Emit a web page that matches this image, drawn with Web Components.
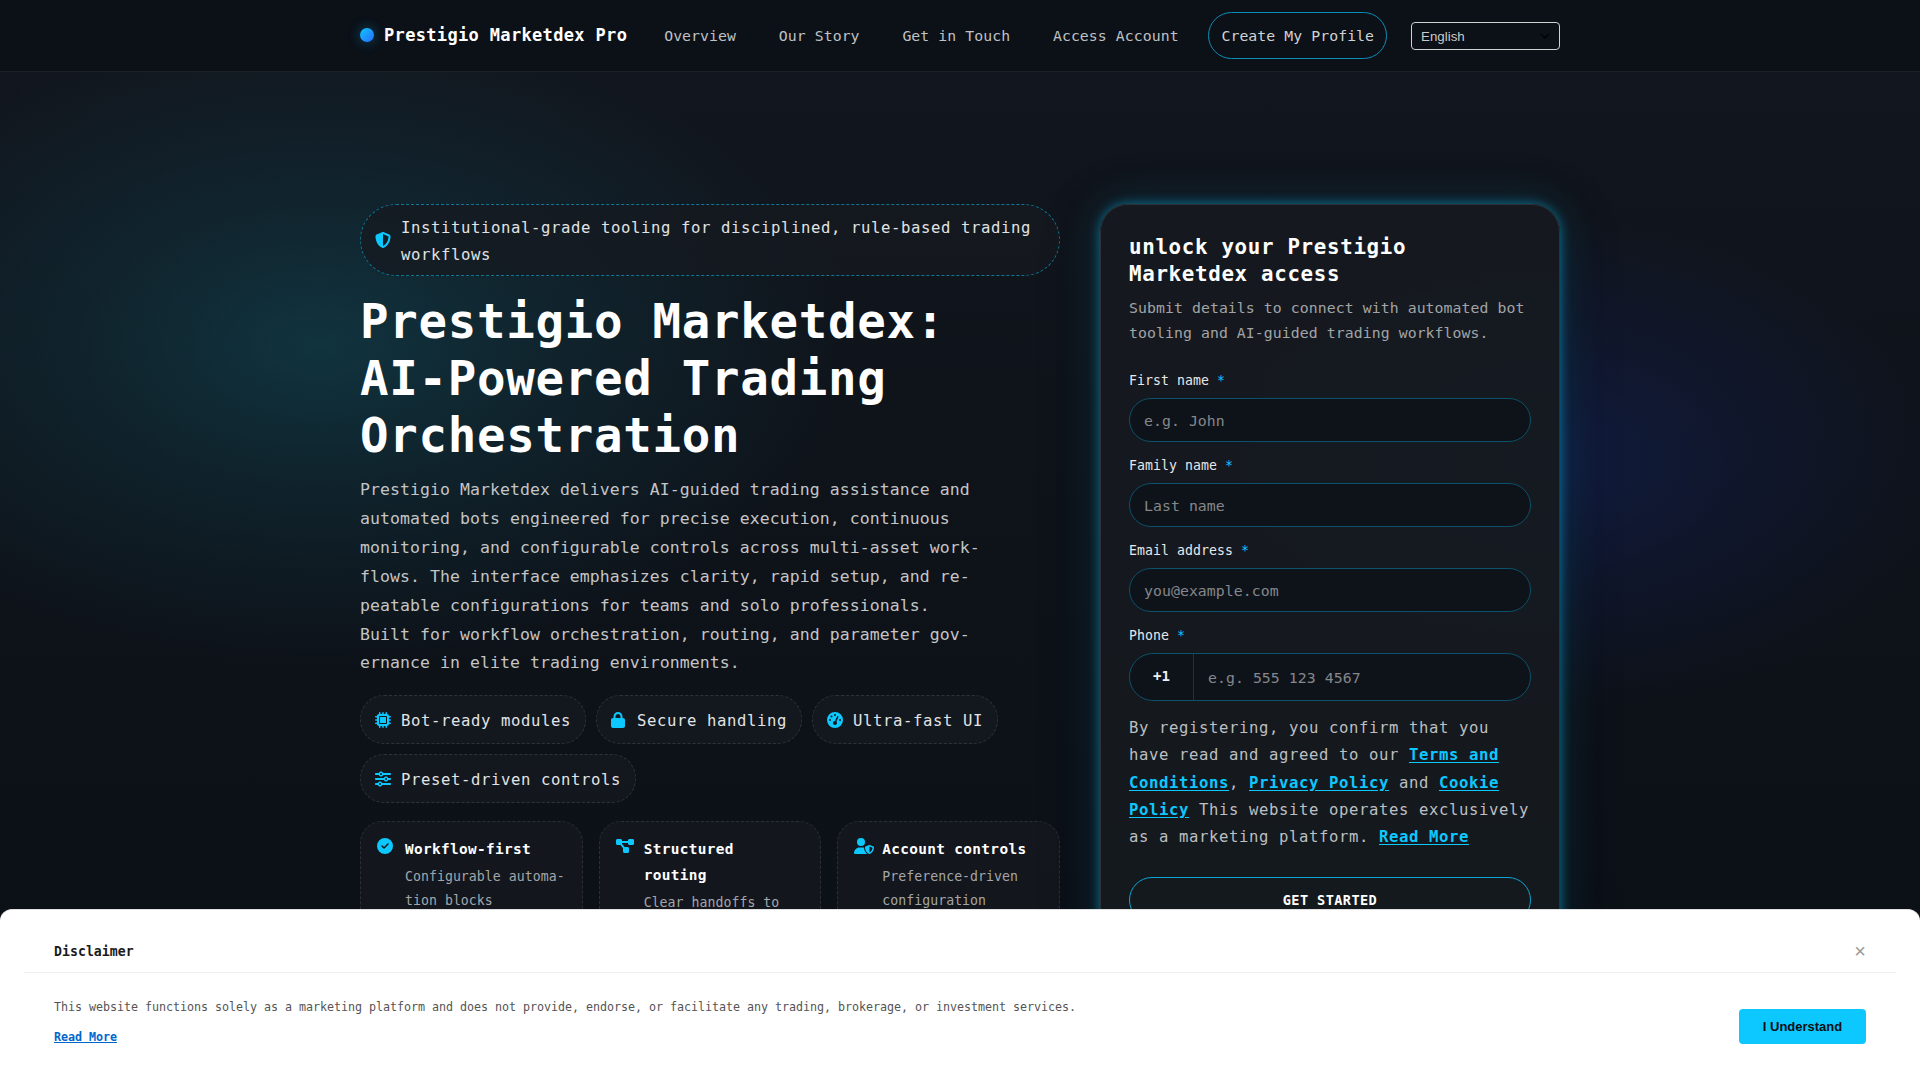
<!DOCTYPE html>
<html lang="en">
<head>
<meta charset="UTF-8">
<title>Prestigio Marketdex Pro</title>
<style>
  html, body {
    margin: 0;
    height: 100%;
    overflow: hidden;
  }
  body {
    --accent: #0dc8ff;
    --surface: rgba(22, 26, 32, 0.75);
    background:
      radial-gradient(ellipse 540px 325px at 320px 345px, rgba(20, 190, 220, 0.19), rgba(20, 190, 220, 0.09) 45%, transparent),
      radial-gradient(ellipse 420px 250px at 1536px 461px, rgba(24, 55, 180, 0.24), rgba(24, 50, 170, 0.12) 50%, transparent),
      linear-gradient(#12161e, #0f131a 400px, #0c1017 900px);
    color: #fff;
    font-family: "DejaVu Sans Mono", monospace;
    font-size: 15.6px;
    line-height: 27.2px;
  }
</style>
</head>
<body>
<site-header brand="Prestigio Marketdex Pro">
  <nav-link>Overview</nav-link>
  <nav-link>Our Story</nav-link>
  <nav-link>Get in Touch</nav-link>
  <nav-link>Access Account</nav-link>
  <nav-link primary>Create My Profile</nav-link>
</site-header>

<hero-section>
  <hero-pill highlight icon="shield">Institutional-grade tooling for disciplined, rule-based trading workflows</hero-pill>
  <span slot="title">Prestigio Marketdex:<br>AI-Powered Trading<br>Orchestration</span>
  <span slot="lead">Prestigio Marketdex delivers AI-guided trading assistance and automated bots engineered for precise execution, continuous monitoring, and configurable controls across multi-asset work&shy;flows. The interface emphasizes clarity, rapid setup, and re&shy;peatable configurations for teams and solo professionals.<br>Built for workflow orchestration, routing, and parameter gov&shy;ernance in elite trading environments.</span>
  <hero-pill slot="chips" icon="chip">Bot-ready modules</hero-pill>
  <hero-pill slot="chips" icon="lock">Secure handling</hero-pill>
  <hero-pill slot="chips" icon="gauge">Ultra-fast UI</hero-pill>
  <hero-pill slot="chips" icon="sliders">Preset-driven controls</hero-pill>
  <feature-card slot="cards" icon="check" heading="Workflow-first">Configurable automa&shy;tion blocks</feature-card>
  <feature-card slot="cards" icon="diagram" heading="Structured routing">Clear handoffs to execution</feature-card>
  <feature-card slot="cards" icon="user" heading="Account controls">Preference-driven configuration</feature-card>
  <signup-card slot="form">
    <form-field label="First name" placeholder="e.g. John"></form-field>
    <form-field label="Family name" placeholder="Last name"></form-field>
    <form-field label="Email address" placeholder="you@example.com"></form-field>
    <form-field label="Phone" placeholder="e.g. 555 123 4567" prefix="+1"></form-field>
  </signup-card>
</hero-section>

<disclaimer-bar heading="Disclaimer">This website functions solely as a marketing platform and does not provide, endorse, or facilitate any trading, brokerage, or investment services.</disclaimer-bar>

<script>
const ICONS = {
  shield: [512, 'M256 0c4.6 0 9.2 1 13.4 2.9L457.7 82.8c22 9.3 38.4 31 38.3 57.2c-.5 99.2-41.3 280.7-213.6 363.2c-16.7 8-36.1 8-52.8 0C57.3 420.7 16.5 239.2 16 140c-.1-26.2 16.3-47.9 38.3-57.2L242.7 2.9C246.8 1 251.4 0 256 0zm0 66.8V444.8C394 378 431.1 230.1 432 141.4L256 66.8l0 0z'],
  chip: [512, 'M176 24c0-13.3-10.7-24-24-24s-24 10.7-24 24V64c-35.3 0-64 28.7-64 64H24c-13.3 0-24 10.7-24 24s10.7 24 24 24H64v56H24c-13.3 0-24 10.7-24 24s10.7 24 24 24H64v56H24c-13.3 0-24 10.7-24 24s10.7 24 24 24H64c0 35.3 28.7 64 64 64v40c0 13.3 10.7 24 24 24s24-10.7 24-24V448h56v40c0 13.3 10.7 24 24 24s24-10.7 24-24V448h56v40c0 13.3 10.7 24 24 24s24-10.7 24-24V448c35.3 0 64-28.7 64-64h40c13.3 0 24-10.7 24-24s-10.7-24-24-24H448V280h40c13.3 0 24-10.7 24-24s-10.7-24-24-24H448V176h40c13.3 0 24-10.7 24-24s-10.7-24-24-24H448c0-35.3-28.7-64-64-64V24c0-13.3-10.7-24-24-24s-24 10.7-24 24V64H280V24c0-13.3-10.7-24-24-24s-24 10.7-24 24V64H176V24zM160 128H352c17.7 0 32 14.3 32 32V352c0 17.7-14.3 32-32 32H160c-17.7 0-32-14.3-32-32V160c0-17.7 14.3-32 32-32zm192 32H160V352H352V160z'],
  lock: [448, 'M144 144v48H304V144c0-44.2-35.8-80-80-80s-80 35.8-80 80zM80 192V144C80 64.5 144.5 0 224 0s144 64.5 144 144v48h16c35.3 0 64 28.7 64 64V448c0 35.3-28.7 64-64 64H64c-35.3 0-64-28.7-64-64V256c0-35.3 28.7-64 64-64H80z'],
  gauge: [512, 'M0 256a256 256 0 1 1 512 0A256 256 0 1 1 0 256zM288 96a32 32 0 1 0 -64 0 32 32 0 1 0 64 0zM256 416c35.3 0 64-28.7 64-64c0-17.4-6.9-33.1-18.1-44.6L366 161.7c5.3-12.1-.2-26.3-12.3-31.6s-26.3 .2-31.6 12.3L257.9 288c-.6 0-1.3 0-1.9 0c-35.3 0-64 28.7-64 64s28.7 64 64 64zM176 144a32 32 0 1 0 -64 0 32 32 0 1 0 64 0zM96 288a32 32 0 1 0 0-64 32 32 0 1 0 0 64zm352-32a32 32 0 1 0 -64 0 32 32 0 1 0 64 0z'],
  sliders: [512, 'M0 416c0 17.7 14.3 32 32 32l54.7 0c12.3 28.3 40.5 48 73.3 48s61-19.7 73.3-48L480 448c17.7 0 32-14.3 32-32s-14.3-32-32-32l-246.7 0c-12.3-28.3-40.5-48-73.3-48s-61 19.7-73.3 48L32 384c-17.7 0-32 14.3-32 32zm128 0a32 32 0 1 1 64 0 32 32 0 1 1 -64 0zM320 256a32 32 0 1 1 64 0 32 32 0 1 1 -64 0zm32-80c-32.8 0-61 19.7-73.3 48L32 224c-17.7 0-32 14.3-32 32s14.3 32 32 32l246.7 0c12.3 28.3 40.5 48 73.3 48s61-19.7 73.3-48l54.7 0c17.7 0 32-14.3 32-32s-14.3-32-32-32l-54.7 0c-12.3-28.3-40.5-48-73.3-48zM192 128a32 32 0 1 1 0-64 32 32 0 1 1 0 64zm73.3-64C253 35.7 224.8 16 192 16s-61 19.7-73.3 48L32 64C14.3 64 0 78.3 0 96s14.3 32 32 32l86.7 0c12.3 28.3 40.5 48 73.3 48s61-19.7 73.3-48L480 128c17.7 0 32-14.3 32-32s-14.3-32-32-32L265.3 64z'],
  check: [512, 'M256 512A256 256 0 1 0 256 0a256 256 0 1 0 0 512zM369 209L241 337c-9.4 9.4-24.6 9.4-33.9 0l-64-64c-9.4-9.4-9.4-24.6 0-33.9s24.6-9.4 33.9 0l47 47L335 175c9.4-9.4 24.6-9.4 33.9 0s9.4 24.6 0 33.9z'],
  diagram: [576, 'M0 80C0 53.5 21.5 32 48 32h96c26.5 0 48 21.5 48 48V96H384V80c0-26.5 21.5-48 48-48h96c26.5 0 48 21.5 48 48v96c0 26.5-21.5 48-48 48H432c-26.5 0-48-21.5-48-48V160H192v16c0 1.7-.1 3.4-.3 5L272 288h96c26.5 0 48 21.5 48 48v96c0 26.5-21.5 48-48 48H272c-26.5 0-48-21.5-48-48V336c0-1.7 .1-3.4 .3-5L144 224H48c-26.5 0-48-21.5-48-48V80z'],
  user: [640, 'M224 256A128 128 0 1 0 224 0a128 128 0 1 0 0 256zm-45.7 48C79.8 304 0 383.8 0 482.3C0 498.7 13.3 512 29.7 512H418.3c1.8 0 3.5-.2 5.3-.5c-76.3-55.1-99.8-141-103.1-200.2c-16.1-4.8-33.1-7.3-50.7-7.3H178.3zm308.8-78.3l-120 48C358 277.4 352 286.2 352 296c0 63.3 25.9 168.8 134.8 214.2c5.9 2.5 12.6 2.5 18.5 0C614.1 464.8 640 359.3 640 296c0-9.8-6-18.6-15.1-22.3l-120-48c-5.7-2.3-12.1-2.3-17.8 0zM591.4 312c-3.9 50.7-27.2 116.7-95.4 149.7V273.8L591.4 312z'],
};

function icon(name) {
  const [width, path] = ICONS[name];
  return `<svg viewBox="0 0 ${width} 512" width="${width / 32}" height="16" fill="currentColor" fill-rule="evenodd"><path d="${path}"/></svg>`;
}

class NavLink extends HTMLElement {
  constructor() {
    super();
    this.attachShadow({ mode: 'open' }).innerHTML = `
      <style>
        :host {
          display: block;
          border: 1px solid transparent;
          border-radius: 999px;
          padding: 10px 12px;
          font-size: 14.8px;
          line-height: 25px;
          letter-spacing: 0.07px;
          color: #bfc1c4;
          white-space: nowrap;
        }
        :host([primary]) {
          border-color: #0b8fb9;
          color: #d0d2d4;
        }
      </style>
      <slot></slot>`;
  }
}

class SiteHeader extends HTMLElement {
  constructor() {
    super();
    this.attachShadow({ mode: 'open' }).innerHTML = `
      <style>
        :host {
          display: block;
          background: #0c1017;
          border-bottom: 1px solid #1d2128;
        }
        .bar {
          display: flex;
          align-items: center;
          justify-content: space-between;
          box-sizing: border-box;
          width: 1200px;
          height: 71px;
          margin: 0 auto;
        }
        .brand {
          display: flex;
          align-items: center;
          gap: 10px;
          font-size: 17px;
          letter-spacing: 0.34px;
          font-weight: bold;
          white-space: nowrap;
        }
        .dot {
          width: 14px;
          height: 14px;
          border-radius: 50%;
          background: linear-gradient(135deg, #0dc8ff, #2a6bff);
          box-shadow: 0 0 12px rgba(13, 200, 255, 0.35), 0 0 0 10px rgba(13, 200, 255, 0.01);
        }
        nav {
          display: flex;
          gap: 16.8px;
        }
        .select {
          display: flex;
          align-items: center;
          justify-content: space-between;
          box-sizing: border-box;
          width: 149px;
          height: 28px;
          padding: 1px 9px 0;
          border: 1px solid #cfd1d3;
          border-radius: 4px;
          font: 13.33px "Liberation Sans", sans-serif;
          color: #c8cacc;
        }
      </style>
      <div class="bar">
        <div class="brand"><span class="dot"></span>${this.getAttribute('brand')}</div>
        <nav><slot></slot></nav>
        <div class="select">English
          <svg width="10" height="6" viewBox="0 0 10 6" fill="none" stroke="#020305" stroke-width="1.6"><path d="M1 1l4 4 4-4"/></svg>
        </div>
      </div>`;
  }
}

class HeroPill extends HTMLElement {
  constructor() {
    super();
    this.attachShadow({ mode: 'open' }).innerHTML = `
      <style>
        :host {
          display: flex;
          align-items: center;
          gap: 10px;
          box-sizing: border-box;
          min-height: 49px;
          padding: 0 14px;
          border: 1px dashed #2e3239;
          border-radius: 24px;
          background: var(--surface);
          letter-spacing: 0.61px;
          color: #e2e3e4;
        }
        :host([highlight]) {
          border-color: #0e7795;
          border-radius: 36px;
          padding: 8px 14px;
          min-height: 72px;
        }
        .icon {
          display: flex;
          flex: 0 0 16px;
          color: var(--accent);
        }
        .text {
          position: relative;
          top: 2px;
        }
      </style>
      <span class="icon">${icon(this.getAttribute('icon'))}</span>
      <span class="text"><slot></slot></span>`;
  }
}

class FeatureCard extends HTMLElement {
  constructor() {
    super();
    this.attachShadow({ mode: 'open' }).innerHTML = `
      <style>
        :host {
          display: flex;
          gap: 8px;
          box-sizing: border-box;
          height: 130px;
          padding: 14px 16px 14px 16px;
          border: 1px dashed #2b2f35;
          border-radius: 22px;
          background: var(--surface);
        }
        .icon {
          display: flex;
          flex: 0 0 20px;
          padding-top: 2px;
          color: var(--accent);
        }
        h3 {
          margin: 0;
          font-size: 14.4px;
          line-height: 26.2px;
          letter-spacing: 0.34px;
        }
        p {
          margin: 2.5px 0 0;
          font-size: 13.2px;
          line-height: 24px;
          letter-spacing: 0.04px;
          color: #a4a6a9;
        }
      </style>
      <span class="icon">${icon(this.getAttribute('icon'))}</span>
      <div>
        <h3>${this.getAttribute('heading')}</h3>
        <p><slot></slot></p>
      </div>`;
  }
}

class FormField extends HTMLElement {
  constructor() {
    super();
    const prefix = this.getAttribute('prefix');
    this.attachShadow({ mode: 'open' }).innerHTML = `
      <style>
        :host {
          display: block;
          margin-bottom: 12px;
        }
        label {
          display: block;
          height: 29px;
          font-size: 13.2px;
          line-height: 24px;
          letter-spacing: 0.06px;
          color: #e6e7e8;
        }
        label span {
          color: var(--accent);
        }
        .box {
          display: flex;
          box-sizing: border-box;
          height: ${prefix ? 48 : 44}px;
          border: 1px solid #0c5069;
          border-radius: 24px;
          background: #0e131a;
          overflow: hidden;
        }
        .prefix {
          display: flex;
          align-items: center;
          justify-content: center;
          flex: 0 0 63px;
          border-right: 1px solid #2a2e35;
          font-size: 14px;
          font-weight: bold;
          color: #f0f0f0;
        }
        input {
          flex: 1;
          min-width: 0;
          margin: 0;
          padding: 1px 14px 0;
          border: 0;
          outline: none;
          background: none;
          color: #fff;
          font: 14.8px "DejaVu Sans Mono", monospace;
          letter-spacing: 0.07px;
        }
        input::placeholder {
          color: #85878b;
        }
      </style>
      <label>${this.getAttribute('label')} <span>*</span></label>
      <div class="box">
        ${prefix ? `<span class="prefix">${prefix}</span>` : ''}
        <input placeholder="${this.getAttribute('placeholder')}">
      </div>`;
  }
}

class SignupCard extends HTMLElement {
  constructor() {
    super();
    this.attachShadow({ mode: 'open' }).innerHTML = `
      <style>
        :host {
          display: block;
          box-sizing: border-box;
          height: 760px;
          padding: 29px 28px 28px;
          border: 1px solid #2c3238;
          border-radius: 28px;
          background: rgba(22, 26, 32, 0.92);
          box-shadow:
            0 0 12px rgba(13, 200, 255, 0.5),
            0 0 46px rgba(13, 200, 255, 0.16),
            0 10px 60px rgba(0, 0, 0, 0.25);
        }
        h2 {
          margin: 0;
          font-size: 20.8px;
          line-height: 27px;
          letter-spacing: 0.68px;
        }
        .sub {
          margin: 7px 0 23.5px;
          font-size: 14.8px;
          line-height: 25.1px;
          letter-spacing: 0.08px;
          color: #a2a4a7;
          white-space: nowrap;
        }
        .terms {
          margin: 14.5px 0 0;
          letter-spacing: 0.61px;
          line-height: 27.25px;
          color: #bdbfc1;
          white-space: nowrap;
        }
        a {
          color: var(--accent);
          font-weight: bold;
          text-decoration: underline;
          text-underline-offset: 2px;
        }
        button {
          display: block;
          width: 100%;
          height: 46px;
          margin: 26px 0 0;
          border: 1px solid #0da5d3;
          border-radius: 23px;
          background: transparent;
          color: #fff;
          font: bold 13.6px "DejaVu Sans Mono", monospace;
          letter-spacing: 0.4px;
        }
      </style>
      <h2>unlock your Prestigio<br>Marketdex access</h2>
      <p class="sub">Submit details to connect with automated bot<br>tooling and AI-guided trading workflows.</p>
      <slot></slot>
      <p class="terms">By registering, you confirm that you<br>
        have read and agreed to our <a>Terms and<br>Conditions</a>, <a>Privacy Policy</a> and <a>Cookie<br>Policy</a> This website operates exclusively<br>
        as a marketing platform. <a>Read More</a></p>
      <button>GET STARTED</button>`;
  }
}

class HeroSection extends HTMLElement {
  constructor() {
    super();
    this.attachShadow({ mode: 'open' }).innerHTML = `
      <style>
        :host {
          display: grid;
          grid-template-columns: 700px 460px;
          gap: 40px;
          width: 1200px;
          margin: 0 auto;
          padding-top: 132px;
        }
        h1 {
          margin: 17px 0 12px;
          font-size: 47.4px;
          line-height: 57px;
          letter-spacing: 0.72px;
        }
        .lead {
          width: 625px;
          margin: 0 0 17px;
          font-size: 16.5px;
          line-height: 28.83px;
          letter-spacing: 0.06px;
          color: #c3c5c7;
          hyphens: manual;
        }
        .chips {
          display: flex;
          flex-wrap: wrap;
          gap: 10px;
          margin-bottom: 18px;
        }
        .cards {
          display: grid;
          grid-template-columns: repeat(3, 1fr);
          gap: 16px;
        }
      </style>
      <div>
        <slot></slot>
        <h1><slot name="title"></slot></h1>
        <p class="lead"><slot name="lead"></slot></p>
        <div class="chips"><slot name="chips"></slot></div>
        <div class="cards"><slot name="cards"></slot></div>
      </div>
      <slot name="form"></slot>`;
  }
}

class DisclaimerBar extends HTMLElement {
  constructor() {
    super();
    this.attachShadow({ mode: 'open' }).innerHTML = `
      <style>
        :host {
          display: block;
          position: fixed;
          left: 0;
          right: 0;
          bottom: 0;
          box-sizing: border-box;
          height: 171px;
          padding: 0 24px;
          border-top: 1px solid #e0e0e0;
          border-radius: 12px 12px 0 0;
          background: #fff;
        }
        header {
          display: flex;
          align-items: center;
          justify-content: space-between;
          height: 41px;
          padding: 21px 30px 0;
          border-bottom: 1px solid #eee;
          font-size: 13.2px;
          font-weight: bold;
          letter-spacing: 0.03px;
          color: #1a1a1a;
        }
        .close {
          font: 20px "Liberation Sans", sans-serif;
          color: #999;
        }
        .body {
          display: flex;
          justify-content: space-between;
          padding: 24px 30px 0;
          font-size: 11.7px;
          line-height: 20px;
          letter-spacing: -0.037px;
          color: #555;
        }
        p {
          margin: 0 0 10px;
        }
        a {
          color: #06c;
          font-weight: bold;
          text-decoration: underline;
          text-underline-offset: 1px;
        }
        button {
          width: 127px;
          height: 35px;
          margin-top: 12px;
          border: 0;
          border-radius: 4px;
          background: var(--accent);
          color: #0b0f16;
          font: bold 13px "Liberation Sans", sans-serif;
        }
      </style>
      <header>${this.getAttribute('heading')}<span class="close">×</span></header>
      <div class="body">
        <div>
          <p><slot></slot></p>
          <a>Read More</a>
        </div>
        <button>I Understand</button>
      </div>`;
  }
}

customElements.define('nav-link', NavLink);
customElements.define('site-header', SiteHeader);
customElements.define('hero-pill', HeroPill);
customElements.define('feature-card', FeatureCard);
customElements.define('form-field', FormField);
customElements.define('signup-card', SignupCard);
customElements.define('hero-section', HeroSection);
customElements.define('disclaimer-bar', DisclaimerBar);
</script>
</body>
</html>
